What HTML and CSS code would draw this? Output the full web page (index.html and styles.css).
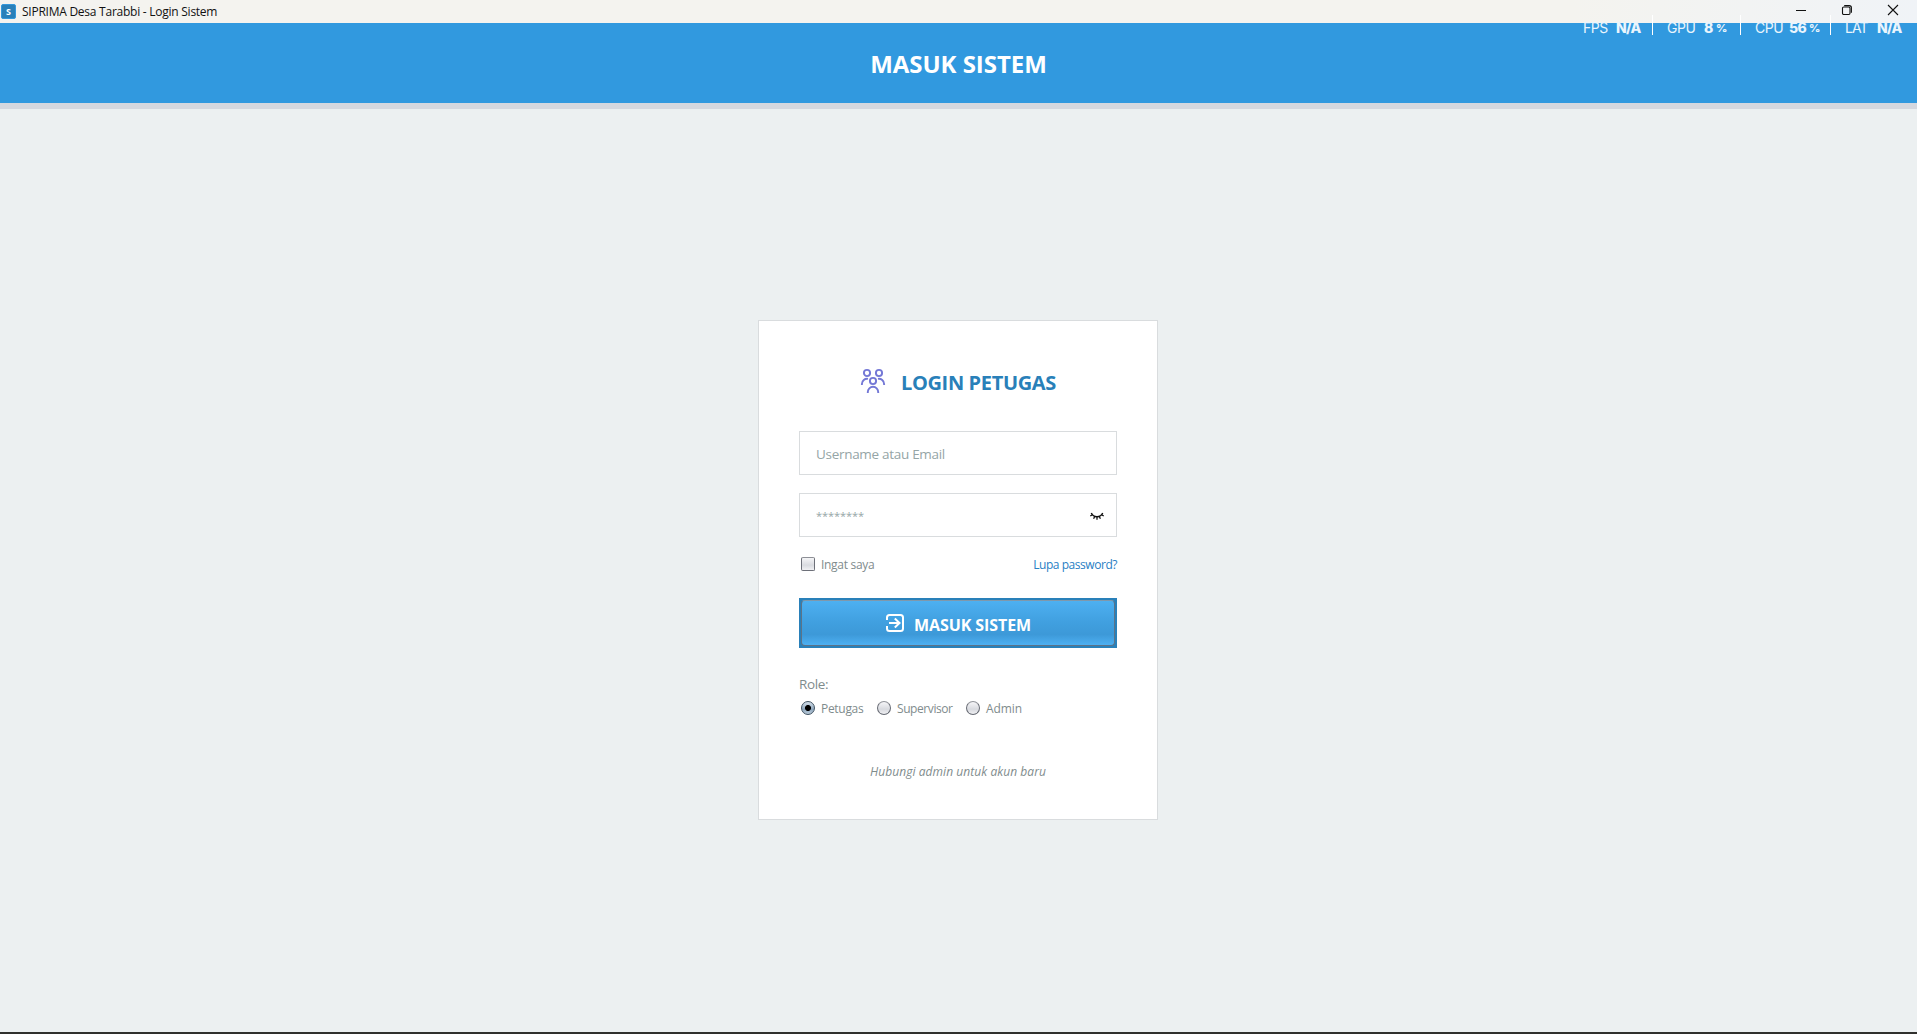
FILE: index.html
```html
<!DOCTYPE html>
<html lang="id">
<head>
<meta charset="utf-8">
<title>SIPRIMA Desa Tarabbi - Login Sistem</title>
<link rel="stylesheet" href="styles.css">
</head>
<body>
<div class="titlebar">
  <div class="app-icon">S</div>
  <span class="app-title">SIPRIMA Desa Tarabbi - Login Sistem</span>
  <div class="window-buttons">
    <svg width="10" height="11" viewBox="0 0 10 11"><path d="M0 5.5h10" stroke="#111" fill="none"/></svg>
    <svg width="10" height="10" viewBox="0 0 10 10"><g fill="none" stroke="#111" stroke-width="1.1"><rect x=".5" y="2" width="7.5" height="7.5" rx="1.2"/><path d="M2.2.6h5q2.2 0 2.2 2.2v5"/></g></svg>
    <svg width="10" height="10" viewBox="0 0 10 10"><path d="M0 0L10 10M10 0L0 10" stroke="#111" stroke-width="1.1" fill="none"/></svg>
  </div>
</div>
<header class="header"><h1>MASUK SISTEM</h1></header>
<main class="stage">
  <form class="card">
    <div class="card-title">
      <svg width="24" height="24" viewBox="0 0 24 24" fill="none" stroke="#7478d6" stroke-width="1.9"><circle cx="6" cy="4" r="3.1"/><circle cx="18" cy="4" r="3.1"/><circle cx="12" cy="12" r="3.1"/><path d="M.9 16v-1A5.2 5.2 0 0 1 7 9.900M23.100 16v-1A5.200 5.200 0 0 0 17 9.900M6.800 24v-1a5.200 5.200 0 0 1 10.400 0v1"/></svg>
      <h2>LOGIN PETUGAS</h2>
    </div>
    <div class="field"><span class="placeholder">Username atau Email</span></div>
    <div class="field">
      <span class="stars">********</span>
      <svg width="14" height="8" viewBox="0 0 14 8" fill="none" stroke="#111" stroke-width="1.5"><path d="M1.3 1Q3 4.7 7 4.7T12.7 1"/><path d="M2.4 2.7L.3 4M4.8 4.3L3.6 6.8M7 4.7v3M9.2 4.3l1.2 2.5M11.6 2.7L13.7 4" stroke-width="1.3"/></svg>
    </div>
    <div class="options">
      <span class="checkbox"></span>
      <span class="remember">Ingat saya</span>
      <a class="forgot">Lupa password?</a>
    </div>
    <div class="submit"><div class="submit-face">
      <svg width="18" height="18" viewBox="0 0 18 18" fill="none" stroke="#fff" stroke-width="2"><path d="M1 6V3.5Q1 1 3.500 1h11Q17 1 17 3.500v11Q17 17 14.500 17h-11Q1 17 1 14.500V12"/><path d="M3 9h10.500M8.800 4.600L13.500 9L8.800 13.400"/></svg>
      <span>MASUK SISTEM</span>
    </div></div>
    <div class="role">Role:</div>
    <div class="radios">
      <span class="radio radio-on"></span><span class="petugas">Petugas</span>
      <span class="radio"></span><span class="supervisor">Supervisor</span>
      <span class="radio"></span><span class="admin">Admin</span>
    </div>
    <p class="note">Hubungi admin untuk akun baru</p>
  </form>
</main>
<div class="bottom-edge"></div>
<div class="metrics">
  <div class="metric fps"><span>FPS</span><b>N/A</b></div>
  <div class="metric gpu"><span>GPU</span><b>8</b><i>%</i></div>
  <div class="metric cpu"><span>CPU</span><b>56</b><i>%</i></div>
  <div class="metric lat"><span>LAT</span><b>N/A</b></div>
</div>
</body>
</html>
```
FILE: styles.css
```css
* { box-sizing: border-box; }

body {
  margin: 0;
  height: 1034px;
  overflow: hidden;
  display: flex;
  flex-direction: column;
  font: 12px/20px "Open Sans", "Noto Sans", sans-serif;
  color: #7f8c8d;
  background: #ecf0f1;
}

h1, h2, p { margin: 0; }
svg { display: block; flex: none; overflow: visible; }

.titlebar {
  height: 23px;
  flex: none;
  display: flex;
  align-items: center;
  padding: 0 19px 0 1px;
  background: linear-gradient(90deg, #f4f3ef 0%, #f4f3ef 82%, #f0f3f7 100%);
  color: #111;
}
.app-icon {
  width: 15px;
  height: 15px;
  border: 1px solid #3498db;
  border-radius: 2px;
  background: #2980b9;
  color: #fff;
  font-size: 9px;
  font-weight: 700;
  line-height: 13px;
  text-align: center;
}
.app-title { margin-left: 6px; letter-spacing: -0.25px; white-space: nowrap; }
.window-buttons { margin-left: auto; padding-bottom: 3px; display: flex; align-items: center; gap: 36px; }

.header {
  height: 86px;
  flex: none;
  padding-top: 1px;
  border-bottom: 6px solid #d5d8df;
  background: #3199df;
  color: #fff;
  text-align: center;
}
h1 { font-size: 24px; line-height: 80px; letter-spacing: -0.05px; }

.stage { flex: 1; display: flex; justify-content: center; align-items: flex-start; padding-top: 211px; }

.card {
  width: 400px;
  height: 500px;
  margin-right: 1px;
  padding: 48px 40px 0;
  border: 1px solid #d9dcde;
  background: #fff;
}

.card-title { height: 24px; display: flex; padding-left: 62px; gap: 16px; }
h2 { padding-top: 2px; font-size: 20px; line-height: 24px; letter-spacing: -0.36px; color: #2980b9; white-space: nowrap; }

.field {
  height: 44px;
  display: flex;
  align-items: center;
  justify-content: space-between;
  margin-top: 18px;
  padding: 1px 12px 0 16px;
  border: 1px solid #d9dcde;
  color: #95a5a6;
}
.card-title + .field { margin-top: 38px; }
.placeholder { font-size: 13.5px; letter-spacing: -0.3px; }
.stars { font-size: 11px; letter-spacing: -0.06px; }

.options { height: 20px; margin-top: 17px; padding-left: 2px; display: flex; align-items: center; }
.checkbox {
  width: 14px;
  height: 14px;
  border: 1px solid #6d7079;
  border-top-color: #8e9097;
  border-radius: 2px;
  background: linear-gradient(#f5f5f7, #d9dbe0 60%, #f1f1f4);
}
.remember { margin-left: 6px; padding-top: 2px; letter-spacing: -0.3px; }
.forgot { margin-left: auto; padding-top: 2px; letter-spacing: -0.45px; color: #2980c4; }

.submit { height: 50px; margin-top: 24px; padding: 2px; background: #2980b9; }
.submit-face {
  height: 46px;
  display: flex;
  align-items: center;
  padding-left: 84px;
  border: 1px solid #5c7388;
  border-top-color: #7f98ab;
  border-radius: 4px;
  background: linear-gradient(#4db0f1, #409fdf 50%, #3d99d8 76%, #4db0f2);
  color: #fff;
}
.submit-face span { margin-left: 10px; padding-top: 3px; font-size: 16px; font-weight: 700; letter-spacing: -0.08px; }

.role { margin-top: 26px; font-size: 13.5px; letter-spacing: -0.35px; }

.radios { height: 20px; margin-top: 4px; padding-left: 2px; display: flex; align-items: center; }
.radio {
  width: 14px;
  height: 14px;
  border: 1px solid #666a73;
  border-top-color: #92959b;
  border-radius: 50%;
  background: linear-gradient(#f6f6f8, #d8dadf 60%, #efeff2);
}
.radio-on {
  border-color: #3f5262;
  background: radial-gradient(circle at 6px 6px, #000 0 2.6px, transparent 3.4px), linear-gradient(#d5e0eb, #8ea6bc 60%, #b9cad9);
}
.radios span:not(.radio) { margin-left: 6px; margin-right: 14px; padding-top: 2px; white-space: nowrap; }
.petugas { width: 42px; letter-spacing: -0.3px; }
.supervisor { width: 55px; letter-spacing: -0.42px; }
.admin { letter-spacing: -0.1px; }

.note { margin-top: 44px; text-align: center; font-style: italic; letter-spacing: 0.06px; }

.bottom-edge { height: 2px; flex: none; background: #30302d; }

/* Performance readout floating over the window */
.metrics {
  position: absolute;
  top: 15px;
  left: 1583px;
  display: flex;
  height: 20px;
  font-family: Inter, "Open Sans", sans-serif;
  font-size: 14px;
  line-height: 26px;
  color: #eaf5fd;
}
.metric { display: flex; white-space: nowrap; }
.metric + .metric { border-left: 1px solid #fff; padding-left: 14px; }
.metric span { width: 33px; letter-spacing: -0.5px; }
.metric b { font-weight: 800; letter-spacing: -0.7px; }
.metric i { font-size: 11px; font-weight: 800; font-style: normal; }
.fps { width: 69px; }
.gpu { width: 88px; }
.cpu { width: 90px; }
.metric.gpu span { width: 37px; }
.gpu b { width: 12px; }
.cpu b { width: 20px; }
.metric.cpu span { width: 34px; }
.metric.lat span { width: 32px; letter-spacing: -0.9px; }
```
